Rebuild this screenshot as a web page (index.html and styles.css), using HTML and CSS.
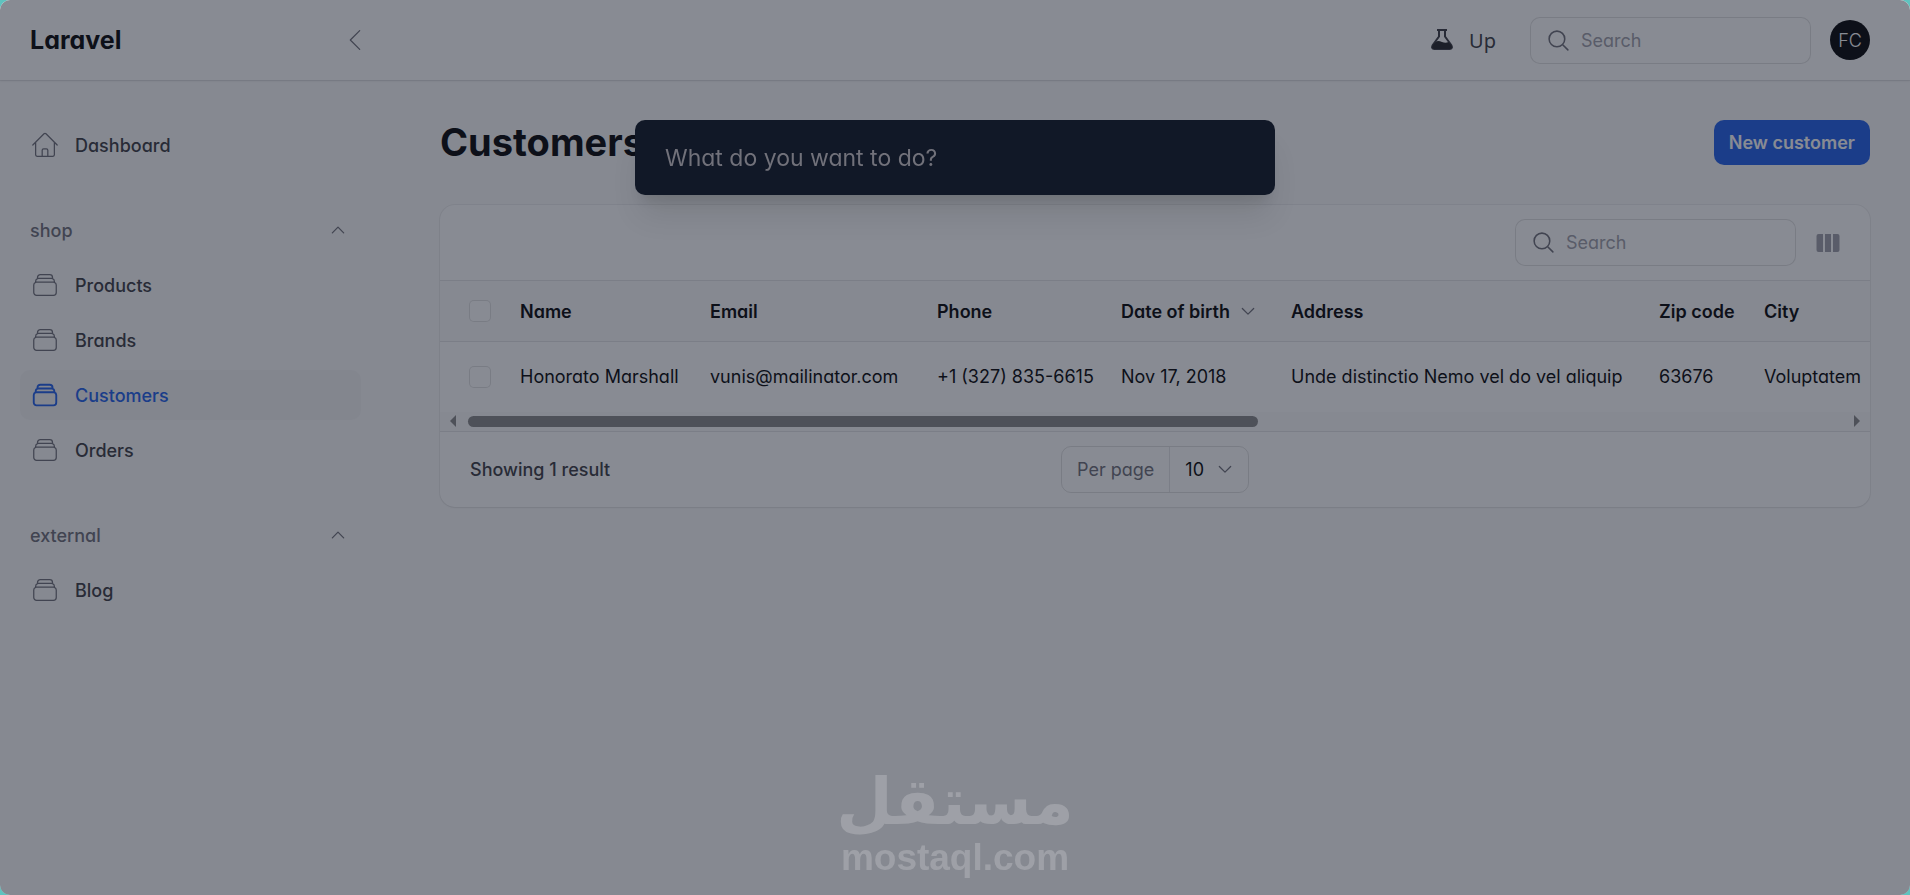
FILE: index.html
```html
<!DOCTYPE html>
<html lang="en">
<head>
    <meta charset="UTF-8">
    <meta name="viewport" content="width=device-width, initial-scale=1.0">
    <title>Customers - Laravel</title>
    <link rel="stylesheet" href="styles.css">
</head>
<body>
    <svg class="sprite" aria-hidden="true">
        <symbol id="icon-stack" viewBox="0 0 24 24">
            <path d="M6 6.878V6a2.25 2.25 0 012.25-2.25h7.5A2.25 2.25 0 0118 6v.878m-12 0c.235-.083.487-.128.75-.128h10.5c.263 0 .515.045.75.128m-12 0A2.25 2.25 0 004.5 9v.878m13.5-3A2.25 2.25 0 0119.5 9v.878m0 0a2.246 2.246 0 00-.75-.128H5.25c-.263 0-.515.045-.75.128m15 0A2.25 2.25 0 0121 12v6a2.25 2.25 0 01-2.25 2.25H5.25A2.25 2.25 0 013 18v-6c0-.98.626-1.813 1.5-2.122"/>
        </symbol>
        <symbol id="icon-home" viewBox="0 0 24 24">
            <path d="M2.25 12l8.954-8.955c.44-.439 1.152-.439 1.591 0L21.75 12M4.5 9.75v10.125c0 .621.504 1.125 1.125 1.125H9.75v-4.875c0-.621.504-1.125 1.125-1.125h2.25c.621 0 1.125.504 1.125 1.125V21h4.125c.621 0 1.125-.504 1.125-1.125V9.75M8.25 21h8.25"/>
        </symbol>
        <symbol id="icon-search" viewBox="0 0 24 24">
            <path d="M21 21l-5.197-5.197m0 0A7.5 7.5 0 105.196 5.196a7.5 7.5 0 0010.607 10.607z"/>
        </symbol>
        <symbol id="icon-up" viewBox="0 0 24 24">
            <path d="M5.200 15.400l6.800-6.800 6.800 6.800"/>
        </symbol>
        <symbol id="icon-down" viewBox="0 0 24 24">
            <path d="M5.200 9l6.800 6.800 6.800-6.800"/>
        </symbol>
        <symbol id="icon-left" viewBox="0 0 24 24">
            <path d="M15.750 19.500L8.250 12l7.500-7.500"/>
        </symbol>
    </svg>

    <div class="app">
        <header class="topbar">
            <div class="brand">
                <a href="#" class="logo">Laravel</a>
                <button type="button" class="icon-btn" aria-label="Collapse sidebar">
                    <svg class="icon icon-lg"><use href="#icon-left"/></svg>
                </button>
            </div>
            <div class="topbar-end">
                <a href="#" class="status">
                    <svg class="flask" viewBox="0 0 22 22">
                        <path class="flask-glass" d="M6 1h10M8 1.500v6L1.800 16c-1.500 2.500-.5 4 1.500 4h15.400c2 0 3-1.500 1.500-4L14 7.500v-6"/>
                        <path class="flask-liquid" d="M4.500 13c2-1.500 4-1 6.500 0s4.500 1 6.500 0l3 3.500c1 2 0 3.500-2 3.500h-15c-2 0-3-1.500-2-3.500z"/>
                    </svg>
                    Up
                </a>
                <label class="search">
                    <svg class="icon icon-md"><use href="#icon-search"/></svg>
                    <input type="search" placeholder="Search" aria-label="Global search">
                </label>
                <button type="button" class="avatar">FC</button>
            </div>
        </header>

        <div class="layout">
            <nav class="sidebar">
                <div class="nav-group">
                    <a href="#" class="nav-item"><svg class="icon icon-lg"><use href="#icon-home"/></svg>Dashboard</a>
                </div>
                <div class="nav-group">
                    <button type="button" class="group-title">shop<svg class="icon icon-sm"><use href="#icon-up"/></svg></button>
                    <a href="#" class="nav-item"><svg class="icon icon-lg"><use href="#icon-stack"/></svg>Products</a>
                    <a href="#" class="nav-item"><svg class="icon icon-lg"><use href="#icon-stack"/></svg>Brands</a>
                    <a href="#" class="nav-item active"><svg class="icon icon-lg"><use href="#icon-stack"/></svg>Customers</a>
                    <a href="#" class="nav-item"><svg class="icon icon-lg"><use href="#icon-stack"/></svg>Orders</a>
                </div>
                <div class="nav-group">
                    <button type="button" class="group-title">external<svg class="icon icon-sm"><use href="#icon-up"/></svg></button>
                    <a href="#" class="nav-item"><svg class="icon icon-lg"><use href="#icon-stack"/></svg>Blog</a>
                </div>
            </nav>

            <main class="content">
                <div class="page-header">
                    <h1>Customers</h1>
                    <button type="button" class="btn-primary">New customer</button>
                </div>

                <section class="card">
                    <div class="toolbar">
                        <label class="search">
                            <svg class="icon icon-md"><use href="#icon-search"/></svg>
                            <input type="search" placeholder="Search" aria-label="Search customers">
                        </label>
                        <button type="button" class="icon-btn columns-btn" aria-label="Toggle columns">
                            <svg viewBox="0 0 24 18">
                                <path d="M2.500 0H7v18H2.500A2 2 0 0 1 .5 16V2a2 2 0 0 1 2-2zM9 0h6v18H9zM17 0h4.500a2 2 0 0 1 2 2v14a2 2 0 0 1-2 2H17z"/>
                            </svg>
                        </button>
                    </div>

                    <div class="table-wrap">
                        <table>
                            <thead>
                                <tr>
                                    <th class="col-check"><input type="checkbox" aria-label="Select all"></th>
                                    <th class="col-name">Name</th>
                                    <th class="col-email">Email</th>
                                    <th class="col-phone">Phone</th>
                                    <th class="col-date"><button type="button" class="sort">Date of birth<svg class="icon icon-sm"><use href="#icon-down"/></svg></button></th>
                                    <th class="col-address">Address</th>
                                    <th class="col-zip">Zip code</th>
                                    <th class="col-city">City</th>
                                </tr>
                            </thead>
                            <tbody>
                                <tr>
                                    <td><input type="checkbox" aria-label="Select Honorato Marshall"></td>
                                    <td>Honorato Marshall</td>
                                    <td>vunis@mailinator.com</td>
                                    <td>+1 (327) 835-6615</td>
                                    <td>Nov 17, 2018</td>
                                    <td>Unde distinctio Nemo vel do vel aliquip</td>
                                    <td>63676</td>
                                    <td>Voluptatem</td>
                                </tr>
                            </tbody>
                        </table>
                    </div>
                    <div class="scrollbar">
                        <span class="arrow arrow-left"></span>
                        <div class="track"><div class="thumb"></div></div>
                        <span class="arrow arrow-right"></span>
                    </div>

                    <div class="card-footer">
                        <span class="result-count">Showing 1 result</span>
                        <div class="per-page">
                            <label for="per-page">Per page</label>
                            <div class="select">
                                <select id="per-page">
                                    <option>10</option>
                                    <option>25</option>
                                    <option>50</option>
                                </select>
                                <svg class="icon icon-sm"><use href="#icon-down"/></svg>
                            </div>
                        </div>
                    </div>
                </section>
            </main>
        </div>
    </div>

    <div class="overlay">
        <div class="spotlight">
            <input type="text" placeholder="What do you want to do?" aria-label="What do you want to do?">
        </div>
    </div>

    <div class="watermark">
        <span class="watermark-ar" lang="ar" dir="rtl">مستقل</span>
        <span class="watermark-en">mostaql.com</span>
    </div>
</body>
</html>
```

FILE: styles.css
```css
:root {
    --gray-50: #fafafa;
    --gray-200: #e4e4e7;
    --gray-400: #a1a1aa;
    --gray-500: #71717a;
    --gray-700: #3f3f46;
    --gray-900: #111827;
    --gray-950: #09090b;
    --primary: #2563eb;
    --ring: rgba(9, 9, 11, 0.12);
}

* {
    box-sizing: border-box;
    margin: 0;
    padding: 0;
}

html {
    background: #5fc3bf;
}

body {
    font-family: Inter, sans-serif;
    font-feature-settings: "cv11";
    font-size: 18px;
    line-height: 25px;
    color: var(--gray-950);
}

a {
    color: inherit;
    text-decoration: none;
}

button,
input,
select {
    font: inherit;
    font-feature-settings: inherit;
    color: inherit;
    background: none;
    border: none;
    outline: none;
}

button {
    cursor: pointer;
}

.sprite {
    display: none;
}

.icon {
    flex: none;
    fill: none;
    stroke: var(--gray-500);
    stroke-width: 1;
    stroke-linecap: round;
    stroke-linejoin: round;
}

.icon-sm {
    width: 20px;
    height: 20px;
    stroke-width: 1.5;
}

.icon-md {
    width: 25px;
    height: 25px;
    stroke-width: 1.5;
}

.icon-lg {
    width: 30px;
    height: 30px;
}

.icon-btn {
    display: flex;
}

.app {
    min-height: 100vh;
    background: var(--gray-50);
    border-radius: 10px;
    overflow: hidden;
}

/* Top bar */
.topbar {
    display: flex;
    align-items: center;
    justify-content: space-between;
    height: 80px;
    padding: 0 40px 0 30px;
    background: white;
    box-shadow: 0 0 0 1px rgba(9, 9, 11, 0.05), 0 1px 2px rgba(0, 0, 0, 0.1);
}

.brand {
    display: flex;
    align-items: center;
    justify-content: space-between;
    width: 340px;
}

.logo {
    font-size: 25px;
    font-weight: 700;
}

.topbar-end {
    display: flex;
    align-items: center;
    gap: 19px;
}

.status {
    display: flex;
    align-items: center;
    gap: 16px;
    margin-right: 15px;
    font-family: "Noto Sans", sans-serif;
    font-size: 20px;
    color: var(--gray-700);
}

.flask {
    width: 22px;
    height: 22px;
}

.flask-glass {
    fill: none;
    stroke: var(--gray-700);
    stroke-width: 2;
}

.flask-liquid {
    fill: #27272a;
}

.search {
    display: flex;
    align-items: center;
    gap: 10px;
    width: 281px;
    height: 47px;
    padding: 0 15px;
    background: white;
    border: 1px solid var(--ring);
    border-radius: 10px;
}

.search input {
    width: 100%;
    min-width: 0;
}

.search input::placeholder {
    color: var(--gray-400);
}

.avatar {
    width: 40px;
    height: 40px;
    border-radius: 50%;
    background: var(--gray-950);
    color: white;
    font-weight: 300;
}

/* Sidebar */
.layout {
    display: flex;
}

.sidebar {
    display: flex;
    flex: none;
    flex-direction: column;
    gap: 35px;
    width: 400px;
    padding: 40px 39px 40px 20px;
}

.nav-group {
    display: flex;
    flex-direction: column;
    gap: 5px;
}

.nav-item {
    display: flex;
    align-items: center;
    gap: 15px;
    height: 50px;
    padding: 0 10px;
    border-radius: 10px;
    font-weight: 500;
    color: var(--gray-700);
}

.nav-item.active {
    background: #f4f4f5;
    color: var(--primary);
}

.nav-item.active .icon {
    stroke: var(--primary);
    stroke-width: 1.5;
}

.group-title {
    display: flex;
    align-items: center;
    justify-content: space-between;
    height: 50px;
    padding: 0 13px 0 10px;
    font-weight: 500;
    color: var(--gray-500);
}

/* Page */
.content {
    flex: 1;
    min-width: 0;
    padding: 40px;
}

.page-header {
    display: flex;
    align-items: center;
    justify-content: space-between;
    margin-bottom: 40px;
}

h1 {
    font-size: 38px;
    font-weight: 700;
    line-height: 45px;
}

.btn-primary {
    height: 45px;
    padding: 0 15px;
    border-radius: 10px;
    background: var(--primary);
    color: white;
    font-weight: 600;
}

.card {
    background: white;
    border-radius: 15px;
    box-shadow: 0 0 0 1px rgba(9, 9, 11, 0.05), 0 1px 2px rgba(0, 0, 0, 0.05);
    overflow: hidden;
}

.toolbar {
    display: flex;
    align-items: center;
    justify-content: flex-end;
    gap: 20px;
    height: 75px;
    padding: 0 30px;
}

.columns-btn svg {
    width: 24px;
    height: 18px;
    fill: var(--gray-400);
}

.table-wrap {
    overflow: hidden;
}

table {
    table-layout: fixed;
    width: 1809px;
    border-collapse: collapse;
    text-align: left;
    white-space: nowrap;
}

th,
td {
    padding: 0 15px;
}

th {
    height: 61px;
    background: var(--gray-50);
    border-top: 1px solid var(--gray-200);
    border-bottom: 1px solid var(--gray-200);
    font-weight: 600;
}

td {
    height: 70px;
}

.col-check {
    width: 65px;
}

.col-name {
    width: 190px;
}

.col-email {
    width: 227px;
}

.col-phone {
    width: 184px;
}

.col-date {
    width: 170px;
}

.col-address {
    width: 368px;
}

.col-zip {
    width: 105px;
}

th:first-child,
td:first-child {
    padding: 0 14px 0 29px;
}

input[type="checkbox"] {
    display: block;
    appearance: none;
    width: 22px;
    height: 22px;
    background: white;
    border: 1px solid var(--ring);
    border-radius: 5px;
}

.sort {
    display: flex;
    align-items: center;
    gap: 8px;
    font-weight: 600;
}

.col-zip,
.col-date {
    padding-right: 0;
}

.scrollbar {
    display: flex;
    align-items: center;
    gap: 12px;
    height: 19px;
    padding: 0 10px;
    background: #fafafa;
}

.track {
    flex: 1;
}

.thumb {
    width: 57.5%;
    height: 11px;
    border-radius: 6px;
    background: #8b8b8b;
}

.arrow {
    border: 6px solid transparent;
}

.arrow-left {
    border-left: none;
    border-right-color: #8b8b8b;
}

.arrow-right {
    border-right: none;
    border-left-color: #8b8b8b;
}

.card-footer {
    display: grid;
    grid-template-columns: 1fr auto 1fr;
    align-items: center;
    height: 76px;
    padding: 0 30px;
    border-top: 1px solid var(--gray-200);
}

.result-count {
    font-weight: 500;
    color: var(--gray-700);
}

.per-page {
    display: flex;
    align-items: center;
    width: 188px;
    height: 47px;
    border: 1px solid var(--ring);
    border-radius: 10px;
}

.per-page label {
    padding: 0 15px;
    color: var(--gray-500);
}

.select {
    display: flex;
    flex: 1;
    align-items: center;
    height: 100%;
    padding: 0 13px 0 15px;
    border-left: 1px solid var(--gray-200);
}

.select select {
    flex: 1;
    min-width: 0;
    appearance: none;
}

/* Command palette */
.overlay {
    position: fixed;
    inset: 0;
    display: flex;
    align-items: flex-start;
    justify-content: center;
    padding-top: 120px;
    background: rgba(17, 24, 39, 0.5);
    border-radius: 10px;
}

.spotlight {
    width: 640px;
    padding: 0 30px;
    background: var(--gray-900);
    border-radius: 10px;
    box-shadow: 0 25px 30px -6px rgba(0, 0, 0, 0.1), 0 10px 12px -6px rgba(0, 0, 0, 0.1);
}

.spotlight input {
    width: 100%;
    height: 75px;
    font-size: 23px;
    color: white;
}

.spotlight input::placeholder {
    color: #71717a;
}

.watermark {
    position: fixed;
    right: 0;
    bottom: 17px;
    left: 0;
    display: flex;
    flex-direction: column;
    align-items: center;
    color: white;
    font-weight: 700;
    opacity: 0.2;
    pointer-events: none;
}

.watermark-ar {
    font-family: "DejaVu Sans", sans-serif;
    font-size: 65px;
    line-height: 72px;
}

.watermark-en {
    font-family: "Liberation Sans", sans-serif;
    font-size: 37px;
    line-height: 40px;
}
```
